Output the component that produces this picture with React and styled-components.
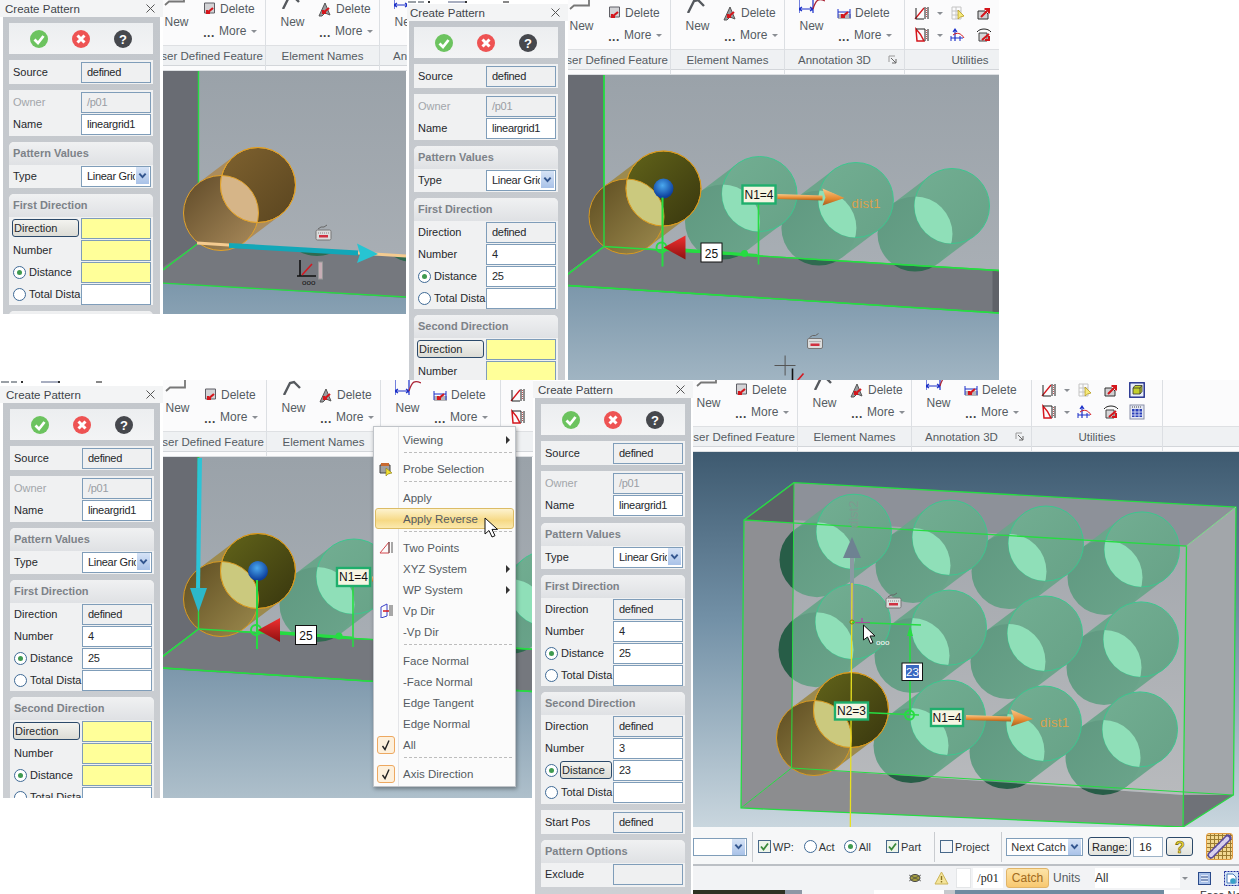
import React from "react";
import styled, { createGlobalStyle } from "styled-components";

const Global = createGlobalStyle`
  html, body { margin: 0; padding: 0; background: #fff; }
  body { font-family: "Liberation Sans", Arial, sans-serif; font-size: 11.5px; color: #333; }
`;

const Page = styled.div`
  width: 1239px; height: 894px; overflow: hidden; background: #fff;
  display: flex; flex-direction: column;
`;
const CollageRow = styled.div`
  display: flex; align-items: flex-start; height: ${p => p.$h}px; flex: none;
`;
const Tile = styled.section`
  position: relative; display: flex; flex: none; overflow: hidden;
  width: ${p => p.$w}px; height: ${p => p.$h}px; background: #fff;
`;
const Stage = styled.div`
  flex: 1; min-width: 0; display: flex; flex-direction: column; overflow: hidden;
`;

/* ---------- dialog ---------- */
const DialogShell = styled.aside`
  flex: none; width: ${p => p.$w}px; box-sizing: border-box;
  display: flex; flex-direction: column; overflow: hidden; background: #fff; font-size: 11px;
`;
const Crumbs = styled.div`
  flex: none; height: ${p => p.$h}px; display: flex; align-items: flex-start; padding-top: 1px; box-sizing: border-box; overflow: hidden;
`;
const Crumb = styled.span`
  flex: none; height: 2px; width: ${p => p.$w}px; margin-left: ${p => p.$ml}px; background: ${p => p.$c};
`;
const TitleBar = styled.div`
  height: 17px; flex: none; display: flex; align-items: center; justify-content: space-between;
  padding: 0 8px 0 ${p => p.$pad}px; background: #f3f4f5; color: #3f444a; font-size: 11.5px;
`;
const DialogBody = styled.div`
  flex: 1; display: flex; flex-direction: column; gap: 6px;
  margin: 0 ${p => p.$mr}px 0 ${p => p.$ml}px; padding: 6px 0 3px ${p => p.$pl}px;
  background: linear-gradient(#c3c7cc, #cdd0d4);
`;
const Card = styled.div`
  width: 144px; flex: none; box-sizing: border-box; background: #f0f1f2; border-radius: ${p => (p.$round ? "5px 5px 0 0" : "0")};
  padding: ${p => (p.$tight ? "1px 2px 1px 4px" : `0 2px ${p.$pb ?? 2}px 4px`)};
`;
const ActionCard = styled(Card)`
  height: 31px; padding: 0; display: flex; align-items: center; justify-content: center; gap: 24px;
  background: linear-gradient(#eceef0, #f3f4f5);
`;
const CardHead = styled.div`
  height: 23px; margin: 0 -2px 0 -4px; padding: 0 0 2px 4px; box-sizing: border-box; display: flex; align-items: center;
  font-weight: bold; color: #7d8288; font-size: 11px; border-radius: 5px 5px 0 0;
  background: linear-gradient(#f0f1f2, #dfe1e4);
`;
const Row = styled.div`
  height: 22px; display: flex; align-items: center; justify-content: space-between;
  color: ${p => (p.$dim ? "#a2a6aa" : "#25282c")};
`;
const FieldBox = styled.div`
  width: 70px; height: 21px; box-sizing: border-box; flex: none; border: 1px solid #7f9db9;
  padding: 0 1px 1px 5px; display: flex; align-items: center; overflow: hidden; white-space: nowrap; letter-spacing: -0.3px;
  color: ${p => (p.$dim ? "#9a9ea4" : "#25282c")};
  background: ${p => (p.$tone === "yellow" ? "#ffff99" : p.$tone === "grey" ? "#eff0f1" : "#fff")};
`;
const ClipText = styled.span`
  flex: 1; min-width: 0; overflow: hidden;
`;
const ArrowTab = styled.span`
  margin-left: 1px; width: 13px; height: 17px; flex: none; display: flex; align-items: center; justify-content: center;
  background: linear-gradient(#d6e3f6, #a9c2e8); color: #33568f;
`;
const RowLabel = styled.span`
  display: flex; align-items: center; gap: 3px; white-space: nowrap;
`;
const ActiveLabel = styled.span`
  width: ${p => p.$w}px; height: 18px; margin-left: ${p => p.$ml}px; margin-right: auto; box-sizing: border-box; display: flex; align-items: center; padding-left: 1px;
  border: 1px solid #2c4a6a; border-radius: 3px; background: linear-gradient(#f3f3ef, #dcdcd6);
`;
const Radio = styled.span`
  width: 13px; height: 13px; box-sizing: border-box; flex: none; border-radius: 50%; border: 1px solid #3f6a96;
  background: #fff; display: flex; align-items: center; justify-content: center;
  &::after { content: ""; width: 5px; height: 5px; border-radius: 50%; background: ${p => (p.$on ? "#3f9a50" : "transparent")}; }
`;

const ChevronDown = ({ s = 9, c = "#33568f" }) => (
  <svg width={s} height={s} viewBox="0 0 10 10"><path d="M1.5 3 5 6.8 8.5 3" fill="none" stroke={c} strokeWidth="2.2" /></svg>
);
const RoundBtn = ({ bg, kind }) => (
  <svg width="18" height="18" viewBox="0 0 18 18">
    <circle cx="9" cy="9" r="9" fill={bg} />
    {kind === "ok" && <path d="M4.5 9.5 8 13l5.5-7" fill="none" stroke="#fff" strokeWidth="2.8" />}
    {kind === "no" && <path d="M5.5 5.5l7 7M12.5 5.5l-7 7" fill="none" stroke="#fff" strokeWidth="3" />}
    {kind === "help" && <text x="9" y="13.5" textAnchor="middle" fill="#fff" fontSize="13" fontWeight="bold" fontFamily="Liberation Sans">?</text>}
  </svg>
);

const DirectionSection = ({ title, values, active, pb }) => {
  const tone = v => (v ? (v === "defined" ? "grey" : "white") : "yellow");
  const labelled = (name, node) => (active === name ? <ActiveLabel $w={67} $ml={-1}>{name}</ActiveLabel> : node);
  return (
    <Card $round $pb={pb}>
      <CardHead>{title}</CardHead>
      <Row>{labelled("Direction", <span>Direction</span>)}<FieldBox $tone={tone(values[0])}>{values[0]}</FieldBox></Row>
      <Row>{labelled("Number", <span>Number</span>)}<FieldBox $tone={tone(values[1])}>{values[1]}</FieldBox></Row>
      <Row>
        <RowLabel><Radio $on />{active === "Distance" ? null : "Distance"}</RowLabel>
        {active === "Distance" && <ActiveLabel $w={52} $ml={2}>Distance</ActiveLabel>}
        <FieldBox $tone={tone(values[2])}>{values[2]}</FieldBox>
      </Row>
      <Row><RowLabel><Radio />Total Dista</RowLabel><FieldBox $tone="white" /></Row>
    </Card>
  );
};

const CRUMBS = [[8, 1, "#9aa0a6"], [6, 2, "#9aa0a6"], [2, 4, "#333"], [17, 18, "#a8aec0"], [2, 0, "#333"], [6, 36, "#888"]];
const PatternDialog = ({ w, top, ml, mr, pl, titlePad, first, second, firstActive, secondActive }) => (
  <DialogShell $w={w}>
    {top > 0 && (
      <Crumbs $h={top}>
        {top > 1 && CRUMBS.map(([cw, gap, c], i) => <Crumb key={i} $w={cw} $ml={gap} $c={c} />)}
      </Crumbs>
    )}
    <TitleBar $pad={titlePad}>
      Create Pattern
      <svg width="9" height="9" viewBox="0 0 9 9"><path d="M.5.5l8 8M8.5.5l-8 8" stroke="#555" fill="none" /></svg>
    </TitleBar>
    <DialogBody $ml={ml} $mr={mr} $pl={pl}>
      <ActionCard>
        <RoundBtn bg="#6cc35f" kind="ok" />
        <RoundBtn bg="#ee5353" kind="no" />
        <RoundBtn bg="#46484d" kind="help" />
      </ActionCard>
      <Card $tight><Row>Source<FieldBox $tone="grey">defined</FieldBox></Row></Card>
      <Card $tight>
        <Row $dim>Owner<FieldBox $tone="grey" $dim>/p01</FieldBox></Row>
        <Row>Name<FieldBox>lineargrid1</FieldBox></Row>
      </Card>
      <Card $round $pb={1}>
        <CardHead>Pattern Values</CardHead>
        <Row>Type<FieldBox><ClipText>Linear Gric</ClipText><ArrowTab><ChevronDown /></ArrowTab></FieldBox></Row>
      </Card>
      <DirectionSection title="First Direction" values={first} active={firstActive} pb={0} />
      <DirectionSection title="Second Direction" values={second} active={secondActive} pb={1} />
      <Card $tight><Row>Start Pos<FieldBox $tone="grey">defined</FieldBox></Row></Card>
      <Card $round>
        <CardHead>Pattern Options</CardHead>
        <Row>Exclude<FieldBox $tone="grey" /></Row>
      </Card>
    </DialogBody>
  </DialogShell>
);

/* ---------- ribbon ---------- */
const RibbonBar = styled.div`
  flex: none; height: ${p => p.$h}px; display: flex; overflow: hidden; background: #fbfbfc;
  border-bottom: 1px solid #dcdfe2; box-sizing: border-box;
`;
const Group = styled.div`
  flex: none; width: ${p => p.$w}px; display: flex; flex-direction: column; box-sizing: border-box;
  border-right: 1px solid #dcdfe3;
  padding-bottom: 4px;
`;
const GroupBody = styled.div`
  flex: 1; min-height: 0; display: flex; align-items: flex-end; overflow: hidden;
  justify-content: ${p => (p.$end ? "flex-end" : "flex-start")};
  padding-left: ${p => p.$pl ?? 14}px; padding-right: ${p => p.$pr ?? 0}px;
`;
const GroupLabel = styled.div`
  height: 21px; flex: none; display: flex; align-items: center; white-space: nowrap; overflow: hidden;
  justify-content: ${p => p.$align || "center"}; padding: ${p => p.$pad || "0 2px"}; color: #555b62; font-size: 11.5px;
  background: #eff1f3; border-top: 1px solid #dee0e3; border-bottom: 1px solid #d3d6da;
  box-sizing: border-box;
`;
const NewColumn = styled.div`
  width: 25px; flex: none; display: flex; flex-direction: column; align-items: center; gap: 6px; padding-bottom: 16px; color: #555b62; font-size: 12px;
  svg { flex: none; }
`;
const StackColumn = styled.div`
  margin-left: 13px; padding-bottom: 3px; display: flex; flex-direction: column; width: 61px; flex: none;
`;
const StackRow = styled.div`
  height: 22px; display: flex; align-items: center; gap: 3px; color: #555b62; white-space: nowrap; font-size: 12px;
`;
const CaretDown = styled.span`
  width: 0; height: 0; border: 3px solid transparent; border-top: 3px solid #8a8e93; border-bottom: 0; margin-left: 2px;
`;
const Dots = styled.span`
  width: 14px; text-align: center; font-weight: bold; line-height: 8px; letter-spacing: 0.5px; padding-top: 4px; color: #444;
`;
const UtilityGrid = styled.div`
  display: grid; grid-template-columns: 36px 26px 26px 26px; grid-auto-rows: 22px; padding: 0 0 3px 9px; align-items: center;
`;
const UtilCell = styled.div`
  display: flex; align-items: center; gap: 5px;
`;

const NewIcon = ({ kind }) => (
  <svg width="26" height="24" viewBox="0 0 26 24" fill="none">
    {kind === "box" && <path d="M1 20 5 16.5H20V2" stroke="#777" strokeWidth="1.8" />}
    {kind === "pen" && <path d="M3 24 9 12l4-1 6 6" stroke="#55595e" strokeWidth="2.4" />}
    {kind === "dim" && (
      <g stroke="#1a2fc8" strokeWidth="1.2">
        <path d="M0 9v15M14 9v15M0 20h14M0 20l3-2M0 20l3 2M14 20l-3-2M14 20l-3 2" />
        <path d="M14 20 C17 10 20 9 26 12" stroke="#a23" />
      </g>
    )}
  </svg>
);
const DeleteIcon = ({ kind }) => (
  <svg width="15" height="15" viewBox="0 0 15 15" fill="none">
    {kind === "box" && <path d="M2.5 1h10v10h-10z" fill="#d3d3d6" stroke="#5f5f66" />}
    {kind === "pen" && <path d="M7 1 1 14h3l3-3 5 2z" fill="#9a9ca0" stroke="#555" />}
    {kind === "dim" && <g><path d="M1 8h13v5H1z" fill="#b4b4b8" /><path d="M1 3v9M13 3v9M1 6h12" stroke="#1a2fc8" /></g>}
    <path d="M5 11 11 6M5 8v3h3" stroke="#d4161c" strokeWidth="2.2" />
  </svg>
);
const RibbonGroup = ({ w, label, kind, end, launcher }) => (
  <Group $w={w}>
    <GroupBody $end={end} $pr={end ? 2 : 0}>
      <NewColumn><NewIcon kind={kind} />New</NewColumn>
      <StackColumn>
        <StackRow><DeleteIcon kind={kind} />Delete</StackRow>
        <StackRow><Dots>...</Dots>More<CaretDown /></StackRow>
      </StackColumn>
    </GroupBody>
    <GroupLabel $align={end ? "flex-end" : launcher ? "space-between" : "center"} $pad={launcher ? "0 6px 0 13px" : undefined}>
      {label}{launcher && <Launcher />}
    </GroupLabel>
  </Group>
);
const UtilIcon = ({ n }) => {
  const black = "#222", red = "#d4161c", blue = "#1a2fc8";
  return (
    <svg width="16" height="16" viewBox="0 0 16 16" fill="none">
      {n === 0 && <g><path d="M1 14 10 3" stroke={red} strokeWidth="1.3" /><path d="M2 3v11h8" stroke={black} /><path d="M11 2v12M14 2v12" stroke={black} /><path d="M12.5 3v10" stroke="#b55" strokeDasharray="1 1" /></g>}
      {n === 1 && <g><path d="M2 2h9v12H2zM2 6h9M2 10h9M6 2v12" stroke="#c4c4c4" /><path d="M8 5v9l2.5-2 3.5-1z" fill="#f6ea7a" stroke="#b59b20" strokeWidth=".8" /></g>}
      {n === 2 && <g><path d="M2 14V6h7l3 3v5z" fill="#d0d0d2" stroke="#333" /><path d="M5 12 12 5M8.5 4H13v4.5" stroke={red} strokeWidth="2" /></g>}
      {n === 3 && <g><rect x=".8" y=".8" width="14.4" height="14.4" fill="#e8eef8" stroke="#1c2a8a" strokeWidth="1.4" /><path d="M4 6 6 3.5h7v6L11 12H4z" fill="#c3d02c" stroke="#333" strokeWidth=".8" /><path d="M4 6h7v6M11 6l2-2.5" stroke="#333" strokeWidth=".8" /></g>}
      {n === 4 && <g><path d="M2 2 C5 5 8 9 10 14H3z" stroke={red} strokeWidth="1.5" /><path d="M2 2h9M11 2v12M14 2v12" stroke={black} /><path d="M12.5 3v10" stroke="#b55" strokeDasharray="1 1" /></g>}
      {n === 5 && <g><path d="M5 14V3M3 5l2-3 2 3" stroke={blue} strokeWidth="1.2" /><path d="M1 11h12M1 9v5M10 9v5" stroke={blue} /><path d="M3 8C7 5 11 6 14 11" stroke={red} /></g>}
      {n === 6 && <g><path d="M1 5C4 1 12 1 15 5" stroke={black} /><path d="M3 6h8v8H3z" fill="#d6d6d8" stroke="#444" /><path d="M6 13 13 7M9 13h4V9" stroke={red} strokeWidth="2" /></g>}
      {n === 7 && <g><rect x="1" y="1" width="14" height="14" fill="#e4e8f4" stroke="#8a90a8" /><path d="M3 5h10v8H3z" fill="#2a3fb8" /><path d="M3 8h10M3 11h10M6 5v8M10 5v8" stroke="#cfd6f2" /><path d="M3 3h10" stroke="#444" strokeDasharray="1 1" /></g>}
    </svg>
  );
};
const Utilities = () => (
  <Group $w={131}>
    <GroupBody $pl={0}>
      <UtilityGrid>
        <UtilCell><UtilIcon n={0} /><CaretDown /></UtilCell>
        <UtilIcon n={1} /><UtilIcon n={2} /><UtilIcon n={3} />
        <UtilCell><UtilIcon n={4} /><CaretDown /></UtilCell>
        <UtilIcon n={5} /><UtilIcon n={6} /><UtilIcon n={7} />
      </UtilityGrid>
    </GroupBody>
    <GroupLabel>Utilities</GroupLabel>
  </Group>
);
const RibbonFill = styled.div`
  flex: 1; display: flex; flex-direction: column; justify-content: flex-end; padding-bottom: 4px;
  &::after { content: ""; height: 21px; background: #eff1f3; border-top: 1px solid #dee0e3; border-bottom: 1px solid #d3d6da; box-sizing: border-box; }
`;
const Launcher = () => (
  <svg width="10" height="10" viewBox="0 0 10 10" fill="none"><path d="M1 1h6M1 1v6" stroke="#999" /><path d="M3 3l5 5M8 4v4H4" stroke="#666" /></svg>
);
const Ribbon = ({ h, first }) => (
  <RibbonBar $h={h}>
    <RibbonGroup w={first} end label="User Defined Feature" kind="box" />
    <RibbonGroup w={114} label="Element Names" kind="pen" />
    <RibbonGroup w={120} label="Annotation 3D" kind="dim" launcher />
    <Utilities />
    <RibbonFill />
  </RibbonBar>
);

/* ---------- 3D scene ---------- */
const SceneSvg = styled.svg`
  display: block; flex: none; width: ${p => p.$w}px; height: ${p => p.$h}px;
  font-family: "Liberation Sans", Arial, sans-serif;
`;
const R = 37.5, NX = 22.6, NY = 29.9, DX = -37, DY = 28;
const PALETTE = {
  green: { body: ["#5f9880", "#6ba58b"], top: ["#72ae92", "#67a287"], lens: "#8fdfb8", line: "#3cc78f" },
  brown: { body: ["#5f4a28", "#ab8c5c"], top: ["#7f622f", "#5a4520"], lens: "#d6b588", line: "#e2a22a" },
  ochre: { body: ["#5d4c20", "#9c8a4e"], top: ["#62641a", "#38360e"], lens: "#cbc97e", line: "#d89a20" },
};
const Cylinder = ({ id, x, y, kind }) => {
  const c = PALETTE[kind], lx = x + DX, ly = y + DY;
  const hull = `${x + NX},${y + NY} ${x - NX},${y - NY} ${lx - NX},${ly - NY} ${lx + NX},${ly + NY}`;
  return (
    <g>
      <defs>
        <linearGradient id={`${id}b`} x1="0" y1="0" x2="1" y2="1"><stop offset="0" stopColor={c.body[0]} /><stop offset="1" stopColor={c.body[1]} /></linearGradient>
        <linearGradient id={`${id}t`} x1="0" y1="0" x2="1" y2="1"><stop offset="0" stopColor={c.top[0]} /><stop offset="1" stopColor={c.top[1]} /></linearGradient>
        <clipPath id={`${id}c`}><circle cx={lx} cy={ly} r={R} /></clipPath>
      </defs>
      <polygon points={hull} fill={c.body[1]} />
      <circle cx={lx} cy={ly} r={R} fill={`url(#${id}b)`} />
      <circle cx={x} cy={y} r={R} fill={`url(#${id}t)`} stroke={c.line} strokeWidth="1" />
      <circle cx={x} cy={y} r={R} fill={c.lens} clipPath={`url(#${id}c)`} />
      {kind !== "green" && <circle cx={lx} cy={ly} r={R} fill="none" stroke={c.line} strokeWidth="1" />}
      {kind !== "green" && <circle cx={x} cy={y} r={R} fill="none" stroke={c.line} strokeWidth="1" />}
    </g>
  );
};
const Keyboard = ({ x, y }) => (
  <g transform={`translate(${x} ${y})`}>
    <path d="M2 -1 5 -3h3l3-2" stroke="#666" fill="none" />
    <rect x="0" y="0" width="15" height="10" rx="1.5" fill="#dcdcdc" stroke="#777" />
    <path d="M2 3h11" stroke="#888" strokeDasharray="1 1" />
    <rect x="3" y="5" width="9" height="2.5" fill="#d03040" />
  </g>
);
const NBox = ({ x, y, w, h, children, size = 12 }) => (
  <g>
    <rect x={x + 1} y={y + 1} width={w - 2} height={h - 2} fill="#f6f5e2" stroke="#1fae6c" strokeWidth="2.4" />
    <text x={x + w / 2} y={y + h / 2 + 4} textAnchor="middle" fontSize={size} fill="#111">{children}</text>
  </g>
);
const OrangeArrow = ({ x, y, id }) => (
  <g transform={`translate(${x} ${y})`}>
    <defs>
      <linearGradient id={id} x1="0" y1="0" x2="0" y2="1"><stop offset="0" stopColor="#f9c98a" /><stop offset=".6" stopColor="#e58a30" /><stop offset="1" stopColor="#a45d20" /></linearGradient>
    </defs>
    <polygon points="0,-2.5 45,-1 45,4 0,2.5" fill={`url(#${id})`} />
    <polygon points="45,-8 67,1.5 45,9 48,1" fill={`url(#${id})`} />
  </g>
);
const DistLabel = ({ x, y }) => <text x={x} y={y} fontSize="13" fill="#d9a24e" letterSpacing="0.4">dist1</text>;
const RedCone = ({ x, y, id }) => (
  <g>
    <defs><linearGradient id={id} x1="0" y1="0" x2="0" y2="1"><stop offset="0" stopColor="#f03030" /><stop offset="1" stopColor="#8e1010" /></linearGradient></defs>
    <polygon points={`${x},${y} ${x + 22},${y - 12} ${x + 22},${y + 12}`} fill={`url(#${id})`} />
  </g>
);
const Cursor = ({ x, y }) => (
  <path transform={`translate(${x} ${y})`} d="M0 0v15l4-3 3 6.5 2.5-1-3-6.5h5z" fill="#fff" stroke="#111" strokeWidth="1" />
);

const LeftRoomBase = ({ id }) => (
  <g>
    <defs>
      <linearGradient id={`${id}sky`} x1="0" y1="283" x2="0" y2="420" gradientUnits="userSpaceOnUse">
        <stop offset="0" stopColor="#7c97ab" /><stop offset="1" stopColor="#b1c2cd" />
      </linearGradient>
      <linearGradient id={`${id}wall`} x1="0" y1="71" x2="0" y2="260" gradientUnits="userSpaceOnUse">
        <stop offset="0" stopColor="#9aa2a9" /><stop offset="1" stopColor="#a8aeb4" />
      </linearGradient>
    </defs>
    <rect x="100" y="40" width="600" height="400" fill={`url(#${id}sky)`} />
    <polygon points="198.5,60 620,60 620,269 198.5,243" fill={`url(#${id}wall)`} />
    <polygon points="140,60 198.5,60 198.5,243 140,285" fill="#696c73" />
  </g>
);
const LeftRoomFloor = ({ id }) => (
  <g>
    <clipPath id={`${id}floor`}><polygon points="198.5,243 594,267 594,309.5 163,283 140,282 140,285" /></clipPath>
    <polygon points="198.5,243 594,267 594,309.5 163,283 140,282 140,285" fill="#75787e" />
    <polygon points="587,267 594,267 594,309 587,308.5" fill="#5f6268" />
    <g clipPath={`url(#${id}floor)`} fill="#2f6a50">
      {[[317, 218.5], [413.4, 224.5], [509.5, 230.5]].map(([cx, cy]) => <circle key={cx} cx={cx} cy={cy} r={R} />)}
    </g>
  </g>
);
const RoomLines = () => (
  <g stroke="#26dc42" fill="none" strokeWidth="1.4">
    <path d="M198.5 60V243L140 288" />
    <path d="M198.5 243 594 267" />
    <path d="M140 280.5 594 309.5" />
  </g>
);
const Greens = ({ id }) => (
  <g>
    <Cylinder id={`${id}g3`} x={546.5} y={202.5} kind="green" />
    <Cylinder id={`${id}g2`} x={450.4} y={196.5} kind="green" />
    <Cylinder id={`${id}g1`} x={354} y={190.5} kind="green" />
  </g>
);
const BlueBall = ({ id }) => (
  <g>
    <defs><radialGradient id={id} cx=".45" cy=".35" r=".6"><stop offset="0" stopColor="#4aa8ee" /><stop offset="1" stopColor="#0d3f9c" /></radialGradient></defs>
    <circle cx="258" cy="185" r="10" fill={`url(#${id})`} />
  </g>
);
const Sizing = ({ id }) => (
  <g>
    <path d="M257 194V263" stroke="#26dc42" strokeWidth="2" />
    <path d="M258 245 352 252" stroke="#26dc42" strokeWidth="3" />
    <path d="M353 195V261" stroke="#26dc42" strokeWidth="1.6" />
    <circle cx="339" cy="250" r="3.5" fill="#26dc42" />
    <circle cx="256" cy="244" r="5" fill="none" stroke="#26dc42" strokeWidth="2" />
    <RedCone x={258} y={244} id={`${id}cone`} />
    <rect x="295.5" y="239.5" width="21" height="19" fill="#fff" stroke="#111" />
    <text x="306" y="254" textAnchor="middle" fontSize="12" fill="#111">25</text>
    <NBox x={336} y={181} w={35} h={20}>N1=4</NBox>
    <OrangeArrow x={372} y={193} id={`${id}or`} />
    <DistLabel x={446} y={204} />
  </g>
);

const SceneOne = () => (
  <SceneSvg $w={243} $h={243} viewBox="163 71 243 243">
    <LeftRoomBase id="s1" />
    <LeftRoomFloor id="s1" />
    <polygon points="198.5,243 163,270 163,283 140,282" fill="#75787e" />
    <g stroke="#26dc42" fill="none" strokeWidth="1.4"><path d="M198.5 71V243L163 270" /><path d="M160 283 406 297" /></g>
    <Cylinder id="s1c" x={258} y={185} kind="brown" />
    <path d="M197 243 406 256" stroke="#f4cb90" strokeWidth="3" />
    <polygon points="229,243 358,250.5 358,255.5 229,248" fill="#12a7b8" />
    <polygon points="357,243.5 378,254 357,263 360,254" fill="#27c4d2" />
    <Keyboard x={316} y={230} />
    <path d="M300 260V276M297 276H316" stroke="#111" strokeWidth="1.6" />
    <path d="M302 275 312 264" stroke="#d41820" strokeWidth="1.6" />
    <rect x="318.5" y="262" width="4" height="17" fill="#c7aeb5" stroke="#999" />
    <text x="302" y="285" fontSize="8" fill="#111">ooo</text>
  </SceneSvg>
);
const SceneTwo = () => (
  <SceneSvg $w={432} $h={305} viewBox="162.5 71.5 432 305">
    <LeftRoomBase id="s2" />
    <Greens id="s2" />
    <LeftRoomFloor id="s2" />
    <RoomLines />
    <Cylinder id="s2c" x={258} y={185} kind="ochre" />
    <RoomLines />
    <BlueBall id="s2b" />
    <Sizing id="s2" />
    <Keyboard x={402} y={335} />
    <path d="M369 362H390M379.6 352V372" stroke="#555" />
    <path d="M387 365V380" stroke="#111" strokeWidth="1.6" />
    <path d="M392 377 398 370" stroke="#d41820" strokeWidth="1.6" />
  </SceneSvg>
);
const SceneThree = () => (
  <SceneSvg $w={369} $h={341} viewBox="163 71 369 341">
    <LeftRoomBase id="s3" />
    <Greens id="s3" />
    <LeftRoomFloor id="s3" />
    <RoomLines />
    <Cylinder id="s3c" x={258} y={185} kind="ochre" />
    <RoomLines />
    <BlueBall id="s3b" />
    <Sizing id="s3" />
    <polygon points="197.5,72 202,72 200,205 196,205" fill="#2cc4d6" />
    <polygon points="190,202 207,202 198.5,226" fill="#2cb8ca" />
  </SceneSvg>
);

const COLS = [0, 1, 2, 3];
const ROWS = [0, 1, 2];
const gridPoint = (r, c) => [854 + 96 * c - r, 531.7 + 5.9 * c + 90 * r];
const SceneFour = () => {
  const all = [];
  ROWS.forEach(r => [...COLS].reverse().forEach(c => { if (!(r === 2 && c === 0)) all.push([r, c]); }));
  const floor = "791.5,768 1184,795 1183,827 741,808";
  const wall = "744,520 794,482 791.5,768 741,808";
  return (
    <SceneSvg $w={546} $h={375} viewBox="693 452 546 375">
      <defs>
        <linearGradient id="s4sky" x1="0" y1="0" x2="0" y2="1"><stop offset="0" stopColor="#3e5a70" /><stop offset=".45" stopColor="#7391a7" /><stop offset="1" stopColor="#c9d6de" /></linearGradient>
        <linearGradient id="s4back" x1="0" y1="0" x2="0" y2="1"><stop offset="0" stopColor="#a3a7ad" /><stop offset="1" stopColor="#b8babd" /></linearGradient>
        <clipPath id="s4out"><polygon points={floor} /><polygon points={wall} /></clipPath>
      </defs>
      <rect x="693" y="452" width="546" height="375" fill="url(#s4sky)" />
      <polygon points="794,482.7 1236,507 1186.5,546 744,520" fill="#8d9199" />
      <polygon points="794,520 1186.5,546 1184,795 791.5,768" fill="url(#s4back)" />
      <polygon points="1186.5,546 1236,507 1233.4,795 1184,795" fill="#a2a6aa" />
      {all.map(([r, c]) => {
        const [x, y] = gridPoint(r, c);
        return <Cylinder key={`${r}${c}`} id={`s4g${r}${c}`} x={x} y={y} kind="green" />;
      })}
      <polygon points={wall} fill="#8e8f93" />
      <polygon points="744,520 794,482.7 794,523" fill="#5d6067" />
      <polygon points={floor} fill="#8c8d8f" />
      <polygon points="1184,795 1233.4,795 1183,827" fill="#6f7278" />
      <g clipPath="url(#s4out)" fill="#275d47">
        {all.map(([r, c]) => {
          const [x, y] = gridPoint(r, c);
          return <circle key={`${r}${c}`} cx={x + DX} cy={y + DY} r={R} />;
        })}
      </g>
      <Cylinder id="s4c" x={851} y={710} kind="ochre" />
      <g stroke="#26dc42" fill="none" strokeWidth="1.3">
        <path d="M794 482.7 1236 507 1233.4 795 1183 827 741 808 744 520Z" />
        <path d="M744 520 1186.5 546 1183 827" />
        <path d="M794 482.7 791.5 768 741 808M791.5 768 1233.4 795" strokeWidth="1" />
        <path d="M1186.5 546 1236 507" stroke="#7fe08a" strokeWidth="1" />
      </g>
      <polygon points="850,558 854,558 854,622 850,622" fill="#8a9aa2" />
      <polygon points="843,558 861,558 852,537" fill="#6e8292" />
      <text transform="translate(858 528) rotate(-90)" fontSize="13" fill="#7f9a90">dist2</text>
      <path d="M852 583 850.3 827" stroke="#e8e020" strokeWidth="1.3" />
      <circle cx="852" cy="622" r="2" fill="#e8e020" stroke="#7a7a10" />
      <path d="M852 622.3 921 625" stroke="#26dc42" strokeWidth="1.6" />
      <path d="M855 622.7H870M862 618V623" stroke="#c030b0" />
      <path d="M910 715V632" stroke="#26dc42" strokeWidth="1.6" />
      <polygon points="907,636 913,636 910,626" fill="#26dc42" />
      <path d="M869 712.7 919 715" stroke="#26dc42" strokeWidth="1.6" />
      <circle cx="909.5" cy="715" r="4.5" fill="none" stroke="#26dc42" strokeWidth="2" />
      <Keyboard x={886} y={598} />
      <rect x="902" y="663" width="20.5" height="17.5" fill="#fff" stroke="#111" />
      <rect x="906" y="665" width="13" height="13" fill="#3a68c0" />
      <text x="912.5" y="676" textAnchor="middle" fontSize="11.5" fill="#fff">23</text>
      <NBox x={834} y={701.5} w={35} h={19}>N2=3</NBox>
      <NBox x={930} y={708} w={34} h={19}>N1=4</NBox>
      <OrangeArrow x={966} y={717.5} id="s4or" />
      <DistLabel x={1040} y={727} />
      <Cursor x={863.5} y={625} />
      <text x="876" y="645" fontSize="8" fill="#fff">ooo</text>
    </SceneSvg>
  );
};

/* ---------- context menu ---------- */
const Menu = styled.nav`
  position: absolute; left: 373px; top: 46px; width: 143px; box-sizing: border-box; padding: 2px 0;
  background: linear-gradient(90deg, #fbfbfb 24px, #e4e5e8 24px, #e4e5e8 25px, #fbfbfb 25px);
  border: 1px solid #c0c4c9; box-shadow: 1px 2px 4px rgba(0, 0, 0, .35); color: #555b62;
`;
const MenuRow = styled.div`
  position: relative; height: 21px; display: flex; align-items: center; box-sizing: border-box;
  ${p => p.$hot && `
    margin: 0 1px; border: 1px solid #dcbc66; border-radius: 3px;
    background: linear-gradient(#fdf3cf, #f6d985 60%, #fbe9ae);
  `}
`;
const MenuGlyph = styled.span`
  width: ${p => (p.$hot ? 23 : 24)}px; flex: none; display: flex; justify-content: center; align-items: center; margin-right: ${p => (p.$hot ? 4 : 5)}px;
`;
const MenuText = styled.span`
  flex: 1;
`;
const SubArrow = styled.span`
  width: 0; height: 0; margin-right: 5px; border: 4px solid transparent; border-left: 4px solid #333; border-right: 0;
`;
const MenuSep = styled.div`
  height: 8px; margin-left: 30px; margin-right: 3px; box-sizing: border-box; padding-top: 2px;
  &::after { content: ""; display: block; border-top: 1px dashed #bdbdbd; }
`;
const CheckTile = styled.span`
  width: 18px; height: 18px; box-sizing: border-box; border: 1px solid #eda860; border-radius: 3px; background: #fdf0dc;
  display: flex; align-items: center; justify-content: center;
`;
const MenuCursor = styled.span`
  position: absolute; left: 108px; top: 8px; display: flex;
`;
const TickMark = () => <svg width="10" height="12" viewBox="0 0 10 12"><path d="M1.5 7 4 10.5 8 1.5" fill="none" stroke="#222" strokeWidth="1.4" /></svg>;
const ProbeGlyph = () => (
  <svg width="14" height="14" viewBox="0 0 14 14"><path d="M1 3h10v8H1z" fill="#a0a0a0" stroke="#444" /><path d="M2 1h8v3H2z" fill="#c96a30" /><path d="M7 6v8l2-2 4-1z" fill="#f2e030" stroke="#8a7a10" strokeWidth=".6" /></svg>
);
const PointsGlyph = () => (
  <svg width="15" height="15" viewBox="0 0 15 15" fill="none"><path d="M1 13 10 2v11H1" stroke="#d4464c" /><path d="M13 2v11" stroke="#555" /><path d="M10 2v11" stroke="#555" /></svg>
);
const VpGlyph = () => (
  <svg width="15" height="15" viewBox="0 0 15 15" fill="none"><path d="M2 4 8 1v12l-6 2z" stroke="#3a40c8" /><path d="M4 8h6" stroke="#d4161c" strokeWidth="1.5" /><path d="M13 2v11M11 2v11" stroke="#555" /></svg>
);
const MENU = [
  ["Viewing", null, true], "-",
  ["Probe Selection", <ProbeGlyph />], "-",
  ["Apply"], ["Apply Reverse", null, false, true], "-",
  ["Two Points", <PointsGlyph />], ["XYZ System", null, true], ["WP System", null, true],
  ["Vp Dir", <VpGlyph />], ["-Vp Dir"], "-",
  ["Face Normal"], ["-Face Normal"], ["Edge Tangent"], ["Edge Normal"],
  ["All", <CheckTile><TickMark /></CheckTile>], "-",
  ["Axis Direction", <CheckTile><TickMark /></CheckTile>],
];
const ContextMenu = () => (
  <Menu>
    {MENU.map((m, i) => m === "-" ? <MenuSep key={i} /> : (
      <MenuRow key={i} $hot={m[3]}>
        <MenuGlyph $hot={m[3]}>{m[1]}</MenuGlyph>
        <MenuText>{m[0]}</MenuText>
        {m[2] && <SubArrow />}
        {m[3] && (
          <MenuCursor><svg width="14" height="21" viewBox="0 0 14 21"><path d="M1 1v16l4-3.5 3 6.5 3-1.3-3-6.3h5.5z" fill="#fff" stroke="#111" /></svg></MenuCursor>
        )}
      </MenuRow>
    ))}
  </Menu>
);

/* ---------- lower toolbar + status ---------- */
const ToolBar = styled.div`
  height: 37px; flex: none; display: flex; align-items: center; background: #f6f7f8; padding-top: 2px; box-sizing: border-box; font-size: 11px;
`;
const ToolItem = styled.label`
  display: flex; align-items: center; gap: 2px; color: #33373b; margin-left: ${p => p.$ml || 0}px; white-space: nowrap;
`;
const Divider = styled.span`
  width: 1px; height: 30px; flex: none; background: #c9ccd0; margin-left: ${p => p.$ml}px;
`;
const Tick = styled.span`
  width: 13px; height: 13px; box-sizing: border-box; border: 1px solid #47688a; background: ${p => (p.$on ? "#eef5ea" : "#f3f5f8")};
  display: flex; align-items: center; justify-content: center;
`;
const ComboBox = styled.div`
  display: flex; align-items: center; justify-content: space-between; box-sizing: border-box; height: 18px; flex: none; white-space: nowrap;
  width: ${p => p.$w}px; margin-left: ${p => p.$ml || 0}px; padding: 0 1px 0 4px; background: #fff; border: 1px solid #7f9db9;
`;
const ComboArrow = styled.span`
  width: 13px; height: 16px; flex: none; display: flex; align-items: center; justify-content: center; background: linear-gradient(#d6e3f6, #a9c2e8);
`;
const SquareBtn = styled.div`
  height: 19px; width: ${p => p.$w}px; flex: none; margin-left: ${p => p.$ml}px; box-sizing: border-box; display: flex; align-items: center; justify-content: center;
  border: 1px solid #2c4a6a; border-radius: 3px; background: linear-gradient(#f7f7f4, #e2e3dd); color: #222;
`;
const PlainField = styled.div`
  height: 20px; width: ${p => p.$w}px; flex: none; margin-left: ${p => p.$ml}px; box-sizing: border-box; display: flex; align-items: center;
  padding-left: 5px; background: #fff; border: 1px solid #9cb2c7; color: #222;
`;
const CatchIcon = styled.div`
  width: 27px; height: 27px; margin-left: ${p => p.$ml}px; box-sizing: border-box; border: 1px solid #e09a40; border-radius: 3px; flex: none; display: flex;
  background:
    repeating-linear-gradient(90deg, transparent 0 3px, #9a7a30 3px 4px),
    repeating-linear-gradient(0deg, transparent 0 3px, #9a7a30 3px 4px),
    #f2d890;
`;
const TickGlyph = () => <svg width="9" height="9" viewBox="0 0 9 9"><path d="M1 4.5 3.5 7.5 8 1.5" fill="none" stroke="#3a8a3a" strokeWidth="1.8" /></svg>;

const StatusBar = styled.div`
  height: 24px; flex: none; display: flex; align-items: center; justify-content: flex-end; background: #f2f3f5;
  border-top: 2px solid #bcc0c5; box-sizing: content-box;
`;
const Badge = styled.span`
  display: flex; align-items: center; justify-content: ${p => p.$center ? "center" : "flex-start"}; flex: none; height: 20px; box-sizing: border-box;
  width: ${p => p.$w}px; margin-left: ${p => p.$ml || 0}px;
  background: ${p => (p.$fill || "transparent")}; border: ${p => (p.$line ? `1px solid ${p.$line}` : "none")}; border-radius: ${p => p.$rad || 0}px;
  font-family: ${p => (p.$serif ? '"Liberation Serif", serif' : "inherit")}; color: ${p => p.$color || "#555b62"}; font-size: ${p => p.$size || 12}px;
`;
const Scraps = styled.div`
  height: 4px; flex: none; display: flex; overflow: hidden;
`;
const Scrap = styled.span`
  width: ${p => p.$w}px; box-sizing: border-box; padding-left: ${p => p.$indent || 0}px; background: ${p => p.$c}; flex: none; font-size: 11px; line-height: 11px; overflow: hidden; white-space: nowrap;
`;

const LowerBars = () => (
  <>
    <ToolBar>
      <ComboBox $w={54}><span /><ComboArrow><ChevronDown /></ComboArrow></ComboBox>
      <Divider $ml={5} />
      <ToolItem $ml={5}><Tick $on><TickGlyph /></Tick>WP:</ToolItem>
      <ToolItem $ml={10}><Radio />Act</ToolItem>
      <ToolItem $ml={9}><Radio $on />All</ToolItem>
      <ToolItem $ml={15}><Tick $on><TickGlyph /></Tick>Part</ToolItem>
      <Divider $ml={13} />
      <ToolItem $ml={5}><Tick />Project</ToolItem>
      <Divider $ml={12} />
      <ComboBox $w={77} $ml={4}>Next Catch<ComboArrow><ChevronDown /></ComboArrow></ComboBox>
      <SquareBtn $w={43} $ml={5}>Range:</SquareBtn>
      <PlainField $w={30} $ml={2}>16</PlainField>
      <SquareBtn $w={27} $ml={3}>
        <svg width="12" height="16" viewBox="0 0 12 16"><text x="6" y="14" textAnchor="middle" fontSize="16" fontWeight="bold" fill="#f0dc30" stroke="#6a5a10" strokeWidth=".6" fontFamily="Liberation Sans">?</text></svg>
      </SquareBtn>
      <CatchIcon $ml={13}>
        <svg width="25" height="25" viewBox="0 0 25 25">
          <path d="M4 21 21 4" stroke="#5a4a9a" strokeWidth="7" strokeLinecap="round" />
          <path d="M4 21 21 4" stroke="#d8d0ee" strokeWidth="4" strokeDasharray="3 2" strokeLinecap="round" />
        </svg>
      </CatchIcon>
    </ToolBar>
    <StatusBar>
      <Badge $w={16}>
        <svg width="14" height="12" viewBox="0 0 14 12"><ellipse cx="7" cy="6" rx="5" ry="3.5" fill="#a8a040" stroke="#444" /><path d="M1 3 13 9M1 9 13 3" stroke="#444" strokeWidth=".7" /></svg>
      </Badge>
      <Badge $w={16} $ml={10}>
        <svg width="15" height="14" viewBox="0 0 15 14"><path d="M7.5 1 14 13H1z" fill="#f4e49a" stroke="#cdb65a" /><path d="M7.5 5v4M7.5 10v1.5" stroke="#8a7420" strokeWidth="1.4" /></svg>
      </Badge>
      <Badge $w={15} $ml={6} $fill="#fff" $line="#e4e6e8" />
      <Badge $w={30} $ml={2} $fill="#fff" $center $serif $color="#222">/p01</Badge>
      <Badge $w={43} $ml={3} $fill="linear-gradient(#fde4a8,#f8c870)" $line="#e0b468" $rad={3} $center $color="#a06a20">Catch</Badge>
      <Badge $w={30} $ml={4}>Units</Badge>
      <Badge $w={85} $ml={12} $fill="#fff" $color="#333">All</Badge>
      <CaretDown />
      <Badge $w={14} $ml={10}>
        <svg width="13" height="13" viewBox="0 0 13 13"><rect x=".5" y=".5" width="12" height="12" fill="#a8c0e8" stroke="#2a4a8a" /><path d="M3 3h7v7H3z" fill="#dfe8f8" /><path d="M3 5h7M3 8h7" stroke="#2a4a8a" /></svg>
      </Badge>
      <Badge $w={15} $ml={12}>
        <svg width="15" height="15" viewBox="0 0 15 15"><rect x=".5" y=".5" width="14" height="14" fill="#d6e6f8" stroke="#1a2a9a" strokeDasharray="2 1" /><path d="M3 3h6l3 3v6H3z" fill="#fff" stroke="#4a7ab8" /><circle cx="9" cy="10" r="2.8" fill="#38a0c8" /></svg>
      </Badge>
    </StatusBar>
    <Scraps>
      <Scrap $w={92} $c="#2f3222" />
      <Scrap $w={17} $c="#8d97a5" />
      <Scrap $w={72} $c="#f2f3f5" />
      <Scrap $w={70} $c="#fff" />
      <Scrap $w={11} $c="#c5c8cc" />
      <Scrap $w={209} $c="#6f8ba0" />
      <Scrap $w={75} $c="#fff" $indent={36}>Face Normal</Scrap>
    </Scraps>
  </>
);

export default function App() {
  return (
    <Page>
      <Global />
      <CollageRow $h={380}>
        <Tile $w={407} $h={314}>
          <PatternDialog w={163} top={0} ml={3} mr={3} pl={6} titlePad={5}
            first={[null, null, null]} second={[null, null, null]} firstActive="Direction" secondActive="Direction" />
          <Stage>
            <Ribbon h={71} first={103} />
            <SceneOne />
          </Stage>
        </Tile>
        <Tile $w={592} $h={380}>
          <PatternDialog w={161} top={4} ml={2} mr={3} pl={5} titlePad={3}
            first={["defined", "4", "25"]} second={[null, null, null]} secondActive="Direction" />
          <Stage>
            <Ribbon h={75} first={103} />
            <SceneTwo />
          </Stage>
        </Tile>
      </CollageRow>
      <CollageRow $h={514}>
        <Tile $w={533} $h={418}>
          <PatternDialog w={163} top={6} ml={3} mr={3} pl={7} titlePad={6}
            first={["defined", "4", "25"]} second={[null, null, null]} secondActive="Direction" />
          <Stage>
            <Ribbon h={77} first={104} />
            <SceneThree />
          </Stage>
          <ContextMenu />
        </Tile>
        <Tile $w={706} $h={514}>
          <PatternDialog w={160} top={1} ml={2} mr={2} pl={6} titlePad={5}
            first={["defined", "4", "25"]} second={["defined", "3", "23"]} secondActive="Distance" />
          <Stage>
            <Ribbon h={72} first={105} />
            <SceneFour />
            <LowerBars />
          </Stage>
        </Tile>
      </CollageRow>
    </Page>
  );
}
